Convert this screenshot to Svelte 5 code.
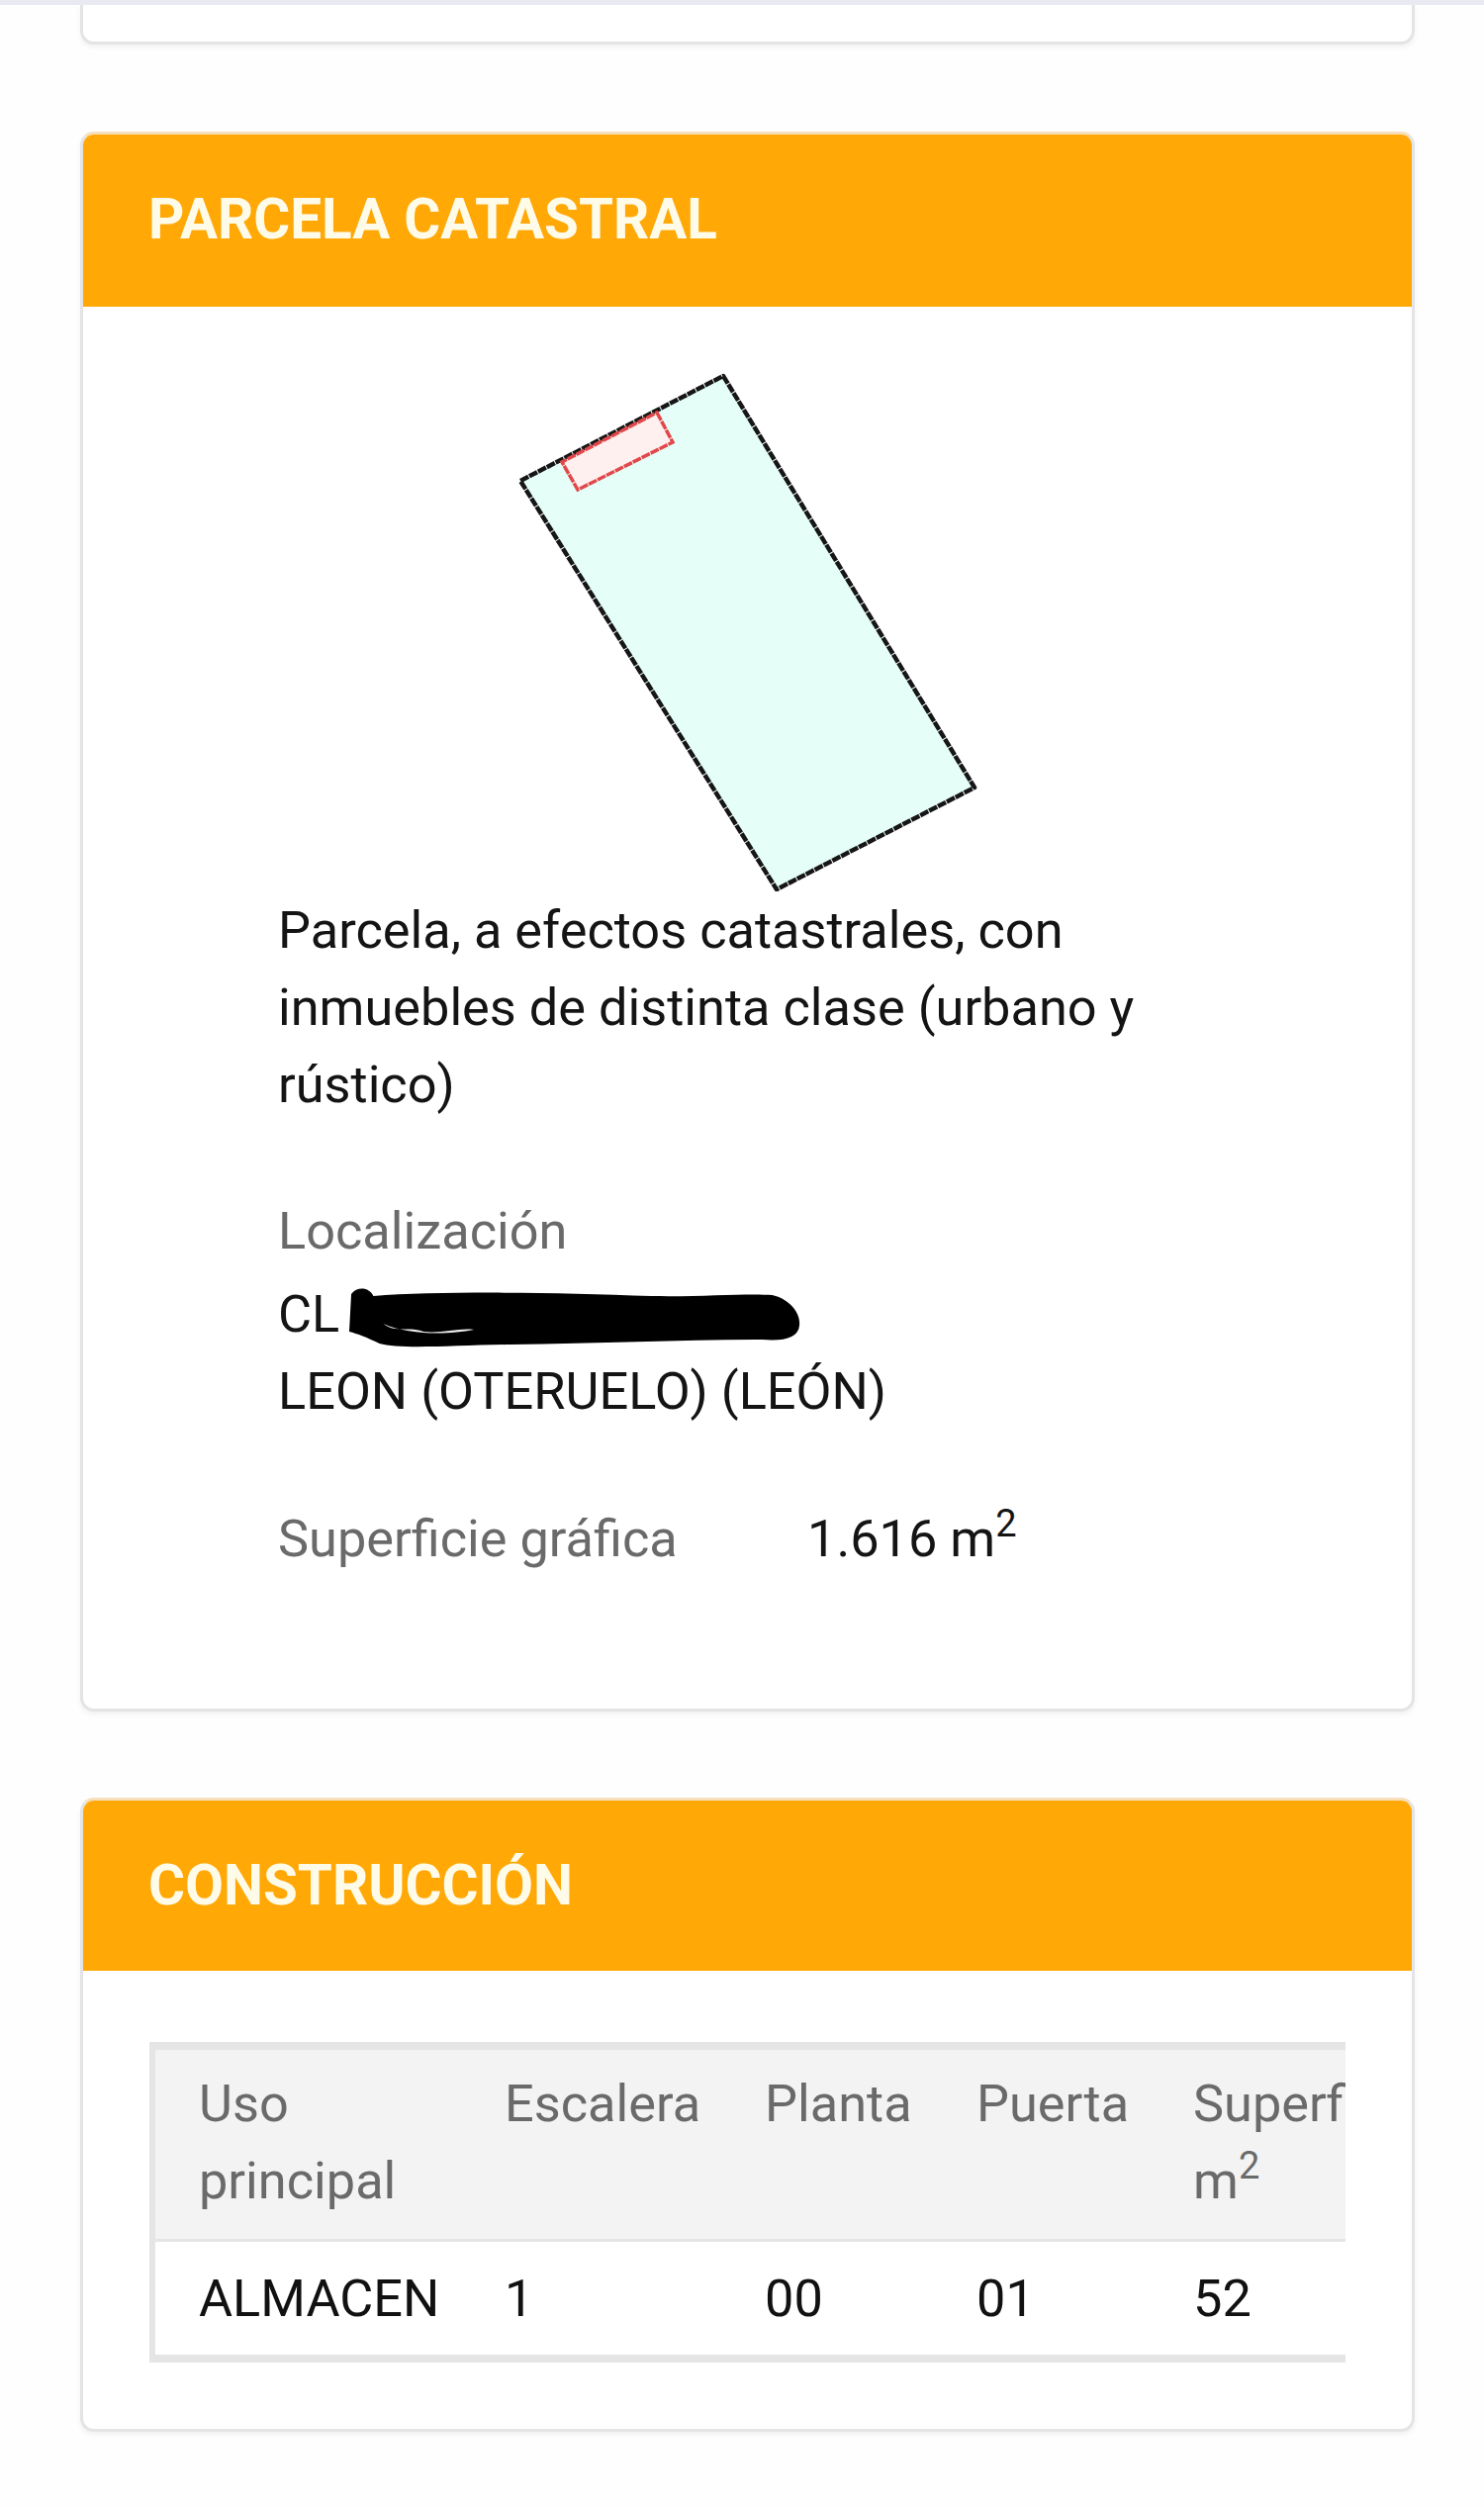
<script lang="ts">
  const columns = [
    { label: 'Uso principal', value: 'ALMACEN', width: 312 },
    { label: 'Escalera', value: '1', width: 263 },
    { label: 'Planta', value: '00', width: 214 },
    { label: 'Puerta', value: '01', width: 219 },
    { label: 'Superficie', value: '52', width: 300, unit: true }
  ];
</script>

<div class="page">
  <div class="card stub"></div>

  <section class="card parcela">
    <h2>PARCELA CATASTRAL</h2>
    <svg class="plot" viewBox="515 371 480 530" width="480" height="530" role="img" aria-label="Plano de la parcela">
      <polygon class="land" points="730,380 984,796 784,899 525,486" />
      <polygon class="built" points="663,417 679,447 583,495 567,467" />
    </svg>
    <div class="info">
      <p>Parcela, a efectos catastrales, con inmuebles de distinta clase (urbano y rústico)</p>
      <p class="label location">Localización</p>
      <p class="street">
        CL
        <svg class="scribble" viewBox="0 0 450 62" width="458" height="62" preserveAspectRatio="none" aria-hidden="true">
          <path d="M2 6 C8 -2 20 -1 24 8 C90 3 200 4 300 8 C350 9 395 5 420 7 C435 10 449 24 447 38 C446 50 432 54 410 52 C330 52 250 56 160 57 C100 58 50 62 30 56 C18 50 8 46 0 44 Z" />
          <path class="gap" d="M34 36 C46 46 60 38 74 44 C92 46 108 40 124 42 C100 47 60 48 34 36 Z" />
        </svg>
      </p>
      <p>LEON (OTERUELO) (LEÓN)</p>
      <p class="area"><span class="label">Superficie gráfica</span><span>1.616 m<sup>2</sup></span></p>
    </div>
  </section>

  <section class="card construccion">
    <h2>CONSTRUCCIÓN</h2>
    <div class="table-wrap">
      <table>
        <colgroup>
          {#each columns as col}
            <col style="width: {col.width}px" />
          {/each}
        </colgroup>
        <thead>
          <tr>
            {#each columns as col}
              <th>{col.label}{#if col.unit}<br />m<sup>2</sup>{/if}</th>
            {/each}
          </tr>
        </thead>
        <tbody>
          <tr>
            {#each columns as col}
              <td>{col.value}</td>
            {/each}
          </tr>
        </tbody>
      </table>
    </div>
  </section>
</div>

<style>
  :global(body) {
    background: #fefefe;
  }

  .page {
    height: 2534px;
    box-sizing: border-box;
    padding: 0 70px 0 81px;
    border-top: 5px solid #e9e9f2;
    overflow: hidden;
    font-family: Roboto, "Liberation Sans", sans-serif;
    font-size: 52.3px;
    line-height: 78px;
    color: #141414;
  }

  .card {
    border: 3px solid #e4e4e6;
    border-radius: 14px;
    background: #fff;
    box-shadow: 0 3px 5px rgba(0, 0, 0, 0.05);
    overflow: hidden;
  }

  .stub {
    height: 37px;
    border-top: 0;
    border-radius: 0 0 14px 14px;
  }

  .parcela {
    margin-top: 88px;
    height: 1597px;
    box-sizing: border-box;
    border-top-color: #f6dfba;
  }

  .construccion {
    margin-top: 87px;
    height: 641px;
    box-sizing: border-box;
    border-top-color: #f6dfba;
  }

  h2 {
    margin: 0;
    height: 174px;
    padding-left: 66px;
    background: #ffa806;
    color: #fffbe9;
    font-size: 56.6px;
    font-weight: 700;
    line-height: 172px;
  }

  .construccion h2 {
    height: 172px;
  }

  .plot {
    display: block;
    margin: 61px auto 0;
  }

  .land {
    fill: #e5fef8;
    stroke: #161616;
    stroke-width: 4.5;
    stroke-dasharray: 9 1;
    stroke-linejoin: round;
  }

  .built {
    fill: #fdf0ef;
    stroke: #e2474a;
    stroke-width: 3.5;
    stroke-dasharray: 9 1;
  }

  .info {
    padding: 0 190px 0 197px;
  }

  p {
    margin: 0;
  }

  .label {
    color: #6a6a6a;
  }

  .location {
    margin-top: 70px;
  }

  .street {
    position: relative;
    margin-top: 6px;
  }

  .scribble {
    position: absolute;
    left: 72px;
    top: 13px;
    fill: #000;
  }

  .gap {
    fill: #e8e8e8;
  }

  .area {
    display: flex;
    margin-top: 71px;
  }

  .area .label {
    width: 535px;
  }

  sup {
    font-size: 38px;
    line-height: 0;
    vertical-align: 20px;
  }

  .table-wrap {
    margin: 72px 67px 0;
    overflow: hidden;
  }

  table {
    width: 1308px;
    table-layout: fixed;
    border-collapse: collapse;
    border: solid #e5e5e6;
    border-width: 8px 0 8px 6px;
  }

  th {
    padding: 15px 0 20px 44px;
    background: #f3f3f4;
    border-bottom: 3px solid #e5e5e6;
    color: #6a6a6a;
    font-weight: 400;
    text-align: left;
    vertical-align: top;
  }

  td {
    padding: 18px 0 18px 44px;
    color: #111;
    white-space: nowrap;
  }
</style>
